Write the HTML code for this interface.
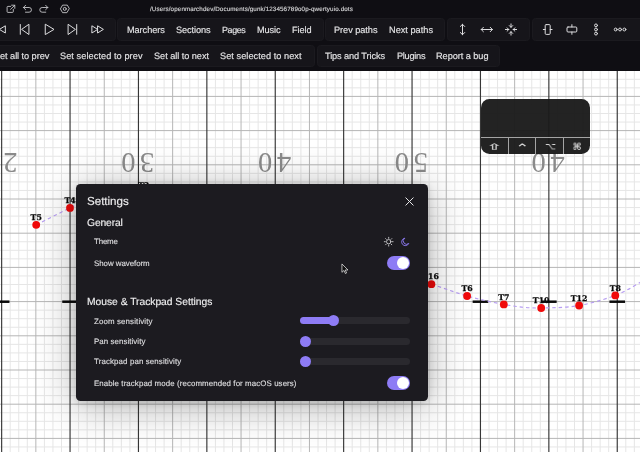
<!DOCTYPE html>
<html lang="en"><head><meta charset="utf-8"><title>OpenMarch – Settings</title>
<style>
*{box-sizing:border-box}
html,body{margin:0;padding:0;background:#fff;overflow:hidden}
#app{position:relative;width:640px;height:452px;overflow:hidden;background:#fff;font-family:"Liberation Sans", sans-serif}
.hdr{position:absolute;left:0;top:0;width:640px;height:71.4px;background:#0f0e13}
.grp{position:absolute;background:#16151a;border:1px solid #1b1a1f;border-radius:3.5px}
.t{position:absolute;white-space:nowrap;line-height:1;font-family:"Liberation Sans", sans-serif;will-change:transform;text-rendering:geometricPrecision;-webkit-text-stroke:.15px currentColor}
.ic{position:absolute;overflow:visible}
.field{position:absolute;left:0;top:0;will-change:transform}
.field .f{stroke:#e6e6e6;stroke-width:1}
.field .m{stroke:#b6b6b6;stroke-width:1}
.field .y{stroke:#363636;stroke-width:1.15}
.field .h{stroke:#0a0a0a;stroke-width:2.5}
.field .n{font-family:"Liberation Serif", serif;font-size:28.6px;fill:#8a8a8a}
.field .d{fill:#f00a0a}
.field .l{font-family:"DejaVu Serif","Liberation Mono",serif;font-weight:bold;font-size:7.8px;fill:#0a0a0a;stroke:#0a0a0a;stroke-width:.25px}
.field .p{fill:none;stroke:#b79df2;stroke-width:1.15;stroke-dasharray:3.5 3}
.kbd{position:absolute;left:480.5px;top:99px;width:109.8px;height:54.7px;background:rgba(26,26,26,.96);border-radius:8.5px;overflow:hidden}
.kbd .sep{position:absolute;left:0;top:37.7px;width:100%;height:1.2px;background:#a4a4a4}
.kbd .v{position:absolute;top:38px;width:1.1px;height:18px;background:#a4a4a4}
.kbd .k{position:absolute;top:38.5px;width:27.5px;height:16px;color:#d4d4d4;font-size:10.5px;font-weight:bold;text-align:center;line-height:16px;font-family:"DejaVu Sans",sans-serif;will-change:transform}
.modal{position:absolute;left:75.8px;top:184px;width:351.8px;height:216.7px;background:#1c1b20;border-radius:4.5px;box-shadow:0 5px 42px rgba(0,0,0,.32),0 1px 9px rgba(0,0,0,.16)}
.track{position:absolute;left:299.7px;width:110.2px;height:7px;border-radius:3.5px;background:#2a292e}
.fill{position:absolute;left:299.7px;height:7px;border-radius:3.5px;background:#8e7cf5}
.thumb{position:absolute;width:11px;height:11px;border-radius:50%;background:#8e7cf5}
.tog{position:absolute;left:386.6px;width:23.4px;height:14px;border-radius:7px;background:#8e7cf5}
.tog i{position:absolute;right:1px;top:1px;width:12px;height:12px;border-radius:50%;background:#fff}
.cursor{position:absolute;left:340.5px;top:263.4px}
</style></head>
<body><div id="app">
<svg class="field" width="640" height="452" viewBox="0 0 640 452"><line class="f" x1="-58.20" y1="70" x2="-58.20" y2="452"/><line class="f" x1="-49.65" y1="70" x2="-49.65" y2="452"/><line class="f" x1="-41.10" y1="70" x2="-41.10" y2="452"/><line class="f" x1="-24.00" y1="70" x2="-24.00" y2="452"/><line class="f" x1="-15.45" y1="70" x2="-15.45" y2="452"/><line class="f" x1="-6.90" y1="70" x2="-6.90" y2="452"/><line class="f" x1="10.20" y1="70" x2="10.20" y2="452"/><line class="f" x1="18.75" y1="70" x2="18.75" y2="452"/><line class="f" x1="27.30" y1="70" x2="27.30" y2="452"/><line class="f" x1="44.40" y1="70" x2="44.40" y2="452"/><line class="f" x1="52.95" y1="70" x2="52.95" y2="452"/><line class="f" x1="61.50" y1="70" x2="61.50" y2="452"/><line class="f" x1="78.60" y1="70" x2="78.60" y2="452"/><line class="f" x1="87.15" y1="70" x2="87.15" y2="452"/><line class="f" x1="95.70" y1="70" x2="95.70" y2="452"/><line class="f" x1="112.80" y1="70" x2="112.80" y2="452"/><line class="f" x1="121.35" y1="70" x2="121.35" y2="452"/><line class="f" x1="129.90" y1="70" x2="129.90" y2="452"/><line class="f" x1="147.00" y1="70" x2="147.00" y2="452"/><line class="f" x1="155.55" y1="70" x2="155.55" y2="452"/><line class="f" x1="164.10" y1="70" x2="164.10" y2="452"/><line class="f" x1="181.20" y1="70" x2="181.20" y2="452"/><line class="f" x1="189.75" y1="70" x2="189.75" y2="452"/><line class="f" x1="198.30" y1="70" x2="198.30" y2="452"/><line class="f" x1="215.40" y1="70" x2="215.40" y2="452"/><line class="f" x1="223.95" y1="70" x2="223.95" y2="452"/><line class="f" x1="232.50" y1="70" x2="232.50" y2="452"/><line class="f" x1="249.60" y1="70" x2="249.60" y2="452"/><line class="f" x1="258.15" y1="70" x2="258.15" y2="452"/><line class="f" x1="266.70" y1="70" x2="266.70" y2="452"/><line class="f" x1="283.80" y1="70" x2="283.80" y2="452"/><line class="f" x1="292.35" y1="70" x2="292.35" y2="452"/><line class="f" x1="300.90" y1="70" x2="300.90" y2="452"/><line class="f" x1="318.00" y1="70" x2="318.00" y2="452"/><line class="f" x1="326.55" y1="70" x2="326.55" y2="452"/><line class="f" x1="335.10" y1="70" x2="335.10" y2="452"/><line class="f" x1="352.20" y1="70" x2="352.20" y2="452"/><line class="f" x1="360.75" y1="70" x2="360.75" y2="452"/><line class="f" x1="369.30" y1="70" x2="369.30" y2="452"/><line class="f" x1="386.40" y1="70" x2="386.40" y2="452"/><line class="f" x1="394.95" y1="70" x2="394.95" y2="452"/><line class="f" x1="403.50" y1="70" x2="403.50" y2="452"/><line class="f" x1="420.60" y1="70" x2="420.60" y2="452"/><line class="f" x1="429.15" y1="70" x2="429.15" y2="452"/><line class="f" x1="437.70" y1="70" x2="437.70" y2="452"/><line class="f" x1="454.80" y1="70" x2="454.80" y2="452"/><line class="f" x1="463.35" y1="70" x2="463.35" y2="452"/><line class="f" x1="471.90" y1="70" x2="471.90" y2="452"/><line class="f" x1="489.00" y1="70" x2="489.00" y2="452"/><line class="f" x1="497.55" y1="70" x2="497.55" y2="452"/><line class="f" x1="506.10" y1="70" x2="506.10" y2="452"/><line class="f" x1="523.20" y1="70" x2="523.20" y2="452"/><line class="f" x1="531.75" y1="70" x2="531.75" y2="452"/><line class="f" x1="540.30" y1="70" x2="540.30" y2="452"/><line class="f" x1="557.40" y1="70" x2="557.40" y2="452"/><line class="f" x1="565.95" y1="70" x2="565.95" y2="452"/><line class="f" x1="574.50" y1="70" x2="574.50" y2="452"/><line class="f" x1="591.60" y1="70" x2="591.60" y2="452"/><line class="f" x1="600.15" y1="70" x2="600.15" y2="452"/><line class="f" x1="608.70" y1="70" x2="608.70" y2="452"/><line class="f" x1="625.80" y1="70" x2="625.80" y2="452"/><line class="f" x1="634.35" y1="70" x2="634.35" y2="452"/><line class="f" x1="642.90" y1="70" x2="642.90" y2="452"/><line class="f" x1="0" y1="79.30" x2="640" y2="79.30"/><line class="f" x1="0" y1="87.85" x2="640" y2="87.85"/><line class="f" x1="0" y1="104.95" x2="640" y2="104.95"/><line class="f" x1="0" y1="113.50" x2="640" y2="113.50"/><line class="f" x1="0" y1="122.05" x2="640" y2="122.05"/><line class="f" x1="0" y1="139.15" x2="640" y2="139.15"/><line class="f" x1="0" y1="147.70" x2="640" y2="147.70"/><line class="f" x1="0" y1="156.25" x2="640" y2="156.25"/><line class="f" x1="0" y1="173.35" x2="640" y2="173.35"/><line class="f" x1="0" y1="181.90" x2="640" y2="181.90"/><line class="f" x1="0" y1="190.45" x2="640" y2="190.45"/><line class="f" x1="0" y1="207.55" x2="640" y2="207.55"/><line class="f" x1="0" y1="216.10" x2="640" y2="216.10"/><line class="f" x1="0" y1="224.65" x2="640" y2="224.65"/><line class="f" x1="0" y1="241.75" x2="640" y2="241.75"/><line class="f" x1="0" y1="250.30" x2="640" y2="250.30"/><line class="f" x1="0" y1="258.85" x2="640" y2="258.85"/><line class="f" x1="0" y1="275.95" x2="640" y2="275.95"/><line class="f" x1="0" y1="284.50" x2="640" y2="284.50"/><line class="f" x1="0" y1="293.05" x2="640" y2="293.05"/><line class="f" x1="0" y1="310.15" x2="640" y2="310.15"/><line class="f" x1="0" y1="318.70" x2="640" y2="318.70"/><line class="f" x1="0" y1="327.25" x2="640" y2="327.25"/><line class="f" x1="0" y1="344.35" x2="640" y2="344.35"/><line class="f" x1="0" y1="352.90" x2="640" y2="352.90"/><line class="f" x1="0" y1="361.45" x2="640" y2="361.45"/><line class="f" x1="0" y1="378.55" x2="640" y2="378.55"/><line class="f" x1="0" y1="387.10" x2="640" y2="387.10"/><line class="f" x1="0" y1="395.65" x2="640" y2="395.65"/><line class="f" x1="0" y1="412.75" x2="640" y2="412.75"/><line class="f" x1="0" y1="421.30" x2="640" y2="421.30"/><line class="f" x1="0" y1="429.85" x2="640" y2="429.85"/><line class="f" x1="0" y1="446.95" x2="640" y2="446.95"/><line class="f" x1="0" y1="455.50" x2="640" y2="455.50"/><line class="m" x1="-32.55" y1="70" x2="-32.55" y2="452"/><line class="m" x1="35.85" y1="70" x2="35.85" y2="452"/><line class="m" x1="104.25" y1="70" x2="104.25" y2="452"/><line class="m" x1="172.65" y1="70" x2="172.65" y2="452"/><line class="m" x1="241.05" y1="70" x2="241.05" y2="452"/><line class="m" x1="309.45" y1="70" x2="309.45" y2="452"/><line class="m" x1="377.85" y1="70" x2="377.85" y2="452"/><line class="m" x1="446.25" y1="70" x2="446.25" y2="452"/><line class="m" x1="514.65" y1="70" x2="514.65" y2="452"/><line class="m" x1="583.05" y1="70" x2="583.05" y2="452"/><line class="m" x1="0" y1="96.40" x2="640" y2="96.40"/><line class="m" x1="0" y1="130.60" x2="640" y2="130.60"/><line class="m" x1="0" y1="164.80" x2="640" y2="164.80"/><line class="m" x1="0" y1="199.00" x2="640" y2="199.00"/><line class="m" x1="0" y1="233.20" x2="640" y2="233.20"/><line class="m" x1="0" y1="267.40" x2="640" y2="267.40"/><line class="m" x1="0" y1="301.60" x2="640" y2="301.60"/><line class="m" x1="0" y1="335.80" x2="640" y2="335.80"/><line class="m" x1="0" y1="370.00" x2="640" y2="370.00"/><line class="m" x1="0" y1="404.20" x2="640" y2="404.20"/><line class="m" x1="0" y1="438.40" x2="640" y2="438.40"/><line class="y" x1="-66.75" y1="70" x2="-66.75" y2="452"/><line class="y" x1="1.65" y1="70" x2="1.65" y2="452"/><line class="y" x1="70.05" y1="70" x2="70.05" y2="452"/><line class="y" x1="138.45" y1="70" x2="138.45" y2="452"/><line class="y" x1="206.85" y1="70" x2="206.85" y2="452"/><line class="y" x1="275.25" y1="70" x2="275.25" y2="452"/><line class="y" x1="343.65" y1="70" x2="343.65" y2="452"/><line class="y" x1="412.05" y1="70" x2="412.05" y2="452"/><line class="y" x1="480.45" y1="70" x2="480.45" y2="452"/><line class="y" x1="548.85" y1="70" x2="548.85" y2="452"/><line class="y" x1="617.25" y1="70" x2="617.25" y2="452"/><line class="h" x1="-6.15" y1="301.7" x2="9.45" y2="301.7"/><line class="h" x1="62.25" y1="301.7" x2="77.85" y2="301.7"/><line class="h" x1="130.65" y1="301.7" x2="146.25" y2="301.7"/><line class="h" x1="199.05" y1="301.7" x2="214.65" y2="301.7"/><line class="h" x1="267.45" y1="301.7" x2="283.05" y2="301.7"/><line class="h" x1="335.85" y1="301.7" x2="351.45" y2="301.7"/><line class="h" x1="404.25" y1="301.7" x2="419.85" y2="301.7"/><line class="h" x1="472.65" y1="301.7" x2="488.25" y2="301.7"/><line class="h" x1="541.05" y1="301.7" x2="556.65" y2="301.7"/><line class="h" x1="609.45" y1="301.7" x2="625.05" y2="301.7"/><g transform="rotate(180 1.65 162)"><text class="n" x="0.05" y="171.0" text-anchor="end">2</text><text class="n" x="4.65" y="171.0">0</text></g><g transform="rotate(180 138.45 162)"><text class="n" x="136.85" y="171.0" text-anchor="end">3</text><text class="n" x="141.45" y="171.0">0</text></g><g transform="rotate(180 275.25 162)"><text class="n" x="273.65" y="171.0" text-anchor="end">4</text><text class="n" x="278.25" y="171.0">0</text></g><g transform="rotate(180 412.05 162)"><text class="n" x="410.45" y="171.0" text-anchor="end">5</text><text class="n" x="415.05" y="171.0">0</text></g><g transform="rotate(180 548.85 162)"><text class="n" x="547.25" y="171.0" text-anchor="end">4</text><text class="n" x="551.85" y="171.0">0</text></g><path class="p" d="M36.2 224.8 L70 207.9 L78 204"/><path class="p" d="M400 277 Q 415 279.5 431.4 284.2 C 443 287.7 455 292.6 467.1 296 S 491 302 503.8 304.4 S 528 308.2 541.2 308 S 567 307.6 579.1 305.5 S 604 299.6 615.3 295.4 S 638 283.5 648.5 277.5"/><circle class="d" cx="36.2" cy="224.8" r="3.9"/><text class="l" x="36.2" y="219.9" text-anchor="middle">T5</text><circle class="d" cx="70" cy="207.9" r="3.9"/><text class="l" x="70" y="203.0" text-anchor="middle">T4</text><circle class="d" cx="431.4" cy="284.2" r="3.9"/><text class="l" x="430.5" y="279.3" text-anchor="middle">T16</text><circle class="d" cx="467.1" cy="296" r="3.9"/><text class="l" x="467.1" y="291.1" text-anchor="middle">T6</text><circle class="d" cx="503.8" cy="304.4" r="3.9"/><text class="l" x="503.8" y="299.5" text-anchor="middle">T7</text><circle class="d" cx="541.2" cy="308" r="3.9"/><text class="l" x="541.2" y="303.1" text-anchor="middle">T10</text><circle class="d" cx="579.1" cy="305.5" r="3.9"/><text class="l" x="579.1" y="300.6" text-anchor="middle">T12</text><circle class="d" cx="615.3" cy="295.4" r="3.9"/><text class="l" x="615.3" y="290.5" text-anchor="middle">T8</text><circle class="d" cx="648.5" cy="277.5" r="3.9"/><text class="l" x="648.5" y="272.6" text-anchor="middle">T11</text><text class="l" x="143.5" y="188.2" text-anchor="middle">T3</text></svg>
<div class="hdr"><div class="grp" style="left:-6px;top:18.3px;width:121.5px;height:22.7px"></div><div class="grp" style="left:117.2px;top:18.3px;width:206.4px;height:22.7px"></div><div class="grp" style="left:325.2px;top:18.3px;width:119.8px;height:22.7px"></div><div class="grp" style="left:446.8px;top:18.3px;width:83.3px;height:22.7px"></div><div class="grp" style="left:531.8px;top:18.3px;width:114.2px;height:22.7px"></div><div class="grp" style="left:-6px;top:45px;width:321.1px;height:22.4px"></div><div class="grp" style="left:316.7px;top:45px;width:183.8px;height:22.4px"></div><svg class="ic" style="left:0;top:0" width="640" height="71" viewBox="0 0 640 71" fill="none" stroke="#dcdcde" stroke-width="1" stroke-linecap="round" stroke-linejoin="round"><g stroke="#c6c6ca" stroke-width=".9"><path d="M10.6 6.4H7.9a.8.8 0 0 0-.8.8v4.4a.8.8 0 0 0 .8.8h4.6a.8.8 0 0 0 .8-.8V9.3"/><path d="M11.6 5.2h3.2v3.2M14.8 5.200L10.600 9.300"/><path d="M25.6 5.300L23.400 7.500l2.200 2.200M23.400 7.500h5.700a2.350 2.350 0 0 1 0 4.700h-3.600"/><path d="M45.650 5.300l2.200 2.200-2.200 2.200M47.850 7.500h-5.700a2.350 2.350 0 0 0 0 4.700h3.600"/><path d="M69.10 8.90L66.92 12.67L62.58 12.67L60.40 8.90L62.57 5.13L66.92 5.13z"/><circle cx="64.75" cy="8.9" r="1.5"/></g><path d="M5.0 26.00L-0.6 29.4L5.0 32.80z"/><path d="M-0.8 26.00L-6.4 29.4L-0.8 32.80z"/><path d="M28.6 24.50L21.6 29.4L28.6 34.30z"/><path d="M20.300 24.50V34.30"/><path d="M45.6 24.40L54.0 29.4L45.6 34.40z"/><path d="M68.4 24.50L75.4 29.4L68.4 34.30z"/><path d="M76.700 24.50V34.30"/><path d="M92.2 26.00L97.7 29.4L92.2 32.80z"/><path d="M97.9 26.00L103.4 29.4L97.9 32.80z"/><path d="M462.500 24.300V34.700M460.300 26.500l2.200-2.200 2.200 2.200M460.300 32.500l2.200 2.200 2.200-2.200"/><path d="M481.200 29.5H492.400M483.400 27.3l-2.200 2.200 2.200 2.200M490.200 27.3l2.200 2.200-2.200 2.200"/><path d="M511.0 23.9V27.3M509.3 25.6L511.0 27.3L512.7 25.6"/><path d="M511.0 35.1V31.7M509.3 33.4L511.0 31.7L512.7 33.4"/><path d="M505.4 29.5H508.8M507.1 27.8L508.8 29.5L507.1 31.2"/><path d="M516.6 29.5H513.2M514.9 27.8L513.2 29.5L514.9 31.2"/><rect x="545.2" y="24.600" width="5" height="9.800" rx="1"/><path d="M543.300 29.500H545.200M550.200 29.500H552.100"/><rect x="567" y="27" width="9.800" height="5" rx="1"/><path d="M571.900 24.700V27M571.900 32V34.300"/><circle cx="596" cy="25.4" r="1.45"/><circle cx="596" cy="29.5" r="1.45"/><circle cx="596" cy="33.6" r="1.45"/><circle cx="615.7" cy="29.500" r="1.45"/><circle cx="620.05" cy="29.500" r="1.45"/><circle cx="624.4" cy="29.500" r="1.45"/></svg></div>
<div class="kbd"><div class="sep"></div><div class="v" style="left:27.2px"></div><div class="v" style="left:54.6px"></div><div class="v" style="left:82.6px"></div><div class="k" style="left:0;transform:translate(-0.4px,0.5px) scale(1.85,.8)">⇧</div><div class="k" style="left:27.5px;transform:translate(0.5px,1.8px) scale(1.55,1.1)">⌃</div><div class="k" style="left:55px;transform:translate(0.6px,-0.2px) scale(.9,.9);font-weight:normal">⌥</div><div class="k" style="left:83px;transform:translate(-0.8px,0.2px) scale(.92,.9)">⌘</div></div>
<div class="modal"></div>
<div class="track" style="top:317.3px"></div><div class="fill" style="top:317.3px;width:34.0px"></div><div class="thumb" style="left:328.2px;top:315.3px"></div><div class="track" style="top:337.7px"></div><div class="thumb" style="left:299.7px;top:335.7px"></div><div class="track" style="top:358.0px"></div><div class="thumb" style="left:299.7px;top:356.0px"></div>
<div class="tog" style="top:256px"><i></i></div>
<div class="tog" style="top:376.3px"><i></i></div>
<svg class="ic" style="left:404.30px;top:196.10px" width="11" height="11" viewBox="0 0 24 24" fill="none" stroke="#e8e8ea" stroke-width="2.18" stroke-linecap="round" stroke-linejoin="round"><path d="M4 4l16 16"/><path d="M20 4L4 20"/></svg><svg class="ic" style="left:383.60px;top:236.80px" width="9.4" height="9.4" viewBox="0 0 24 24" fill="none" stroke="#d6d6d8" stroke-width="2.17" stroke-linecap="round" stroke-linejoin="round"><circle cx="12" cy="12" r="5.600"/><path d="M20.60 12.00L23.20 12.00M18.08 18.08L19.92 19.92M12.00 20.60L12.00 23.20M5.92 18.08L4.08 19.92M3.40 12.00L0.80 12.00M5.92 5.92L4.08 4.08M12.00 3.40L12.00 0.80M18.08 5.92L19.92 4.08"/></svg><svg class="ic" style="left:400.40px;top:236.50px" width="10" height="10" viewBox="0 0 24 24" fill="none" stroke="#8e7cf5" stroke-width="2.16" stroke-linecap="round" stroke-linejoin="round"><path d="M10.500 3a9 9 0 1 0 10.500 12.500A7.500 7.500 0 0 1 10.500 3z"/></svg>
<div class="t" style="left:150.30px;top:7.00px;font-size:6.25px;letter-spacing:0.118px;color:#d0d0d2">/Users/openmarchdev/Documents/gunk/123456789o0p-qwertyuio.dots</div><div class="t" style="left:126.60px;top:26.00px;font-size:9.2px;letter-spacing:-0.071px;color:#e4e4e6">Marchers</div><div class="t" style="left:176.00px;top:26.00px;font-size:9.2px;letter-spacing:-0.107px;color:#e4e4e6">Sections</div><div class="t" style="left:221.90px;top:26.00px;font-size:8.9px;letter-spacing:-0.343px;color:#e4e4e6">Pages</div><div class="t" style="left:257.00px;top:26.00px;font-size:9.2px;letter-spacing:-0.125px;color:#e4e4e6">Music</div><div class="t" style="left:292.00px;top:26.00px;font-size:9.2px;letter-spacing:-0.105px;color:#e4e4e6">Field</div><div class="t" style="left:334.00px;top:26.00px;font-size:9.2px;letter-spacing:-0.047px;color:#e4e4e6">Prev paths</div><div class="t" style="left:388.50px;top:26.00px;font-size:9.2px;letter-spacing:0.009px;color:#e4e4e6">Next paths</div><div class="t" style="left:-6.30px;top:52.00px;font-size:9.2px;letter-spacing:-0.063px;color:#e4e4e6">Set all to prev</div><div class="t" style="left:60.00px;top:52.00px;font-size:9.2px;letter-spacing:0.068px;color:#e4e4e6">Set selected to prev</div><div class="t" style="left:153.50px;top:52.00px;font-size:9.2px;letter-spacing:-0.048px;color:#e4e4e6">Set all to next</div><div class="t" style="left:220.00px;top:52.00px;font-size:9.2px;letter-spacing:0.042px;color:#e4e4e6">Set selected to next</div><div class="t" style="left:325.00px;top:52.00px;font-size:9.2px;letter-spacing:-0.103px;color:#e4e4e6">Tips and Tricks</div><div class="t" style="left:396.50px;top:52.00px;font-size:9.2px;letter-spacing:-0.273px;color:#e4e4e6">Plugins</div><div class="t" style="left:436.00px;top:52.00px;font-size:9.2px;letter-spacing:-0.057px;color:#e4e4e6">Report a bug</div><div class="t" style="left:86.90px;top:196.00px;font-size:11.6px;letter-spacing:-0.015px;color:#ededee">Settings</div><div class="t" style="left:86.90px;top:219.00px;font-size:10.3px;letter-spacing:-0.123px;color:#ededee">General</div><div class="t" style="left:93.90px;top:238.00px;font-size:7.9px;letter-spacing:-0.166px;color:#dcdcde">Theme</div><div class="t" style="left:93.90px;top:260.00px;font-size:7.9px;letter-spacing:-0.037px;color:#dcdcde">Show waveform</div><div class="t" style="left:87.00px;top:298.00px;font-size:10.3px;letter-spacing:-0.022px;color:#ededee">Mouse &amp; Trackpad Settings</div><div class="t" style="left:93.50px;top:318.00px;font-size:7.9px;letter-spacing:0.128px;color:#dcdcde">Zoom sensitivity</div><div class="t" style="left:93.50px;top:338.00px;font-size:7.9px;letter-spacing:0.069px;color:#dcdcde">Pan sensitivity</div><div class="t" style="left:93.50px;top:358.00px;font-size:7.9px;letter-spacing:0.124px;color:#dcdcde">Trackpad pan sensitivity</div><div class="t" style="left:93.50px;top:380.00px;font-size:7.9px;letter-spacing:0.087px;color:#dcdcde">Enable trackpad mode (recommended for macOS users)</div>
<svg class="cursor" width="8.4" height="11.2" viewBox="0 0 9 12"><path d="M1 1v9l2.200-2 1.500 3.300 1.300-.6-1.500-3.200H7.500z" fill="#111" stroke="#e8e8e8" stroke-width=".8" stroke-linejoin="round"/></svg>
</div></body></html>
